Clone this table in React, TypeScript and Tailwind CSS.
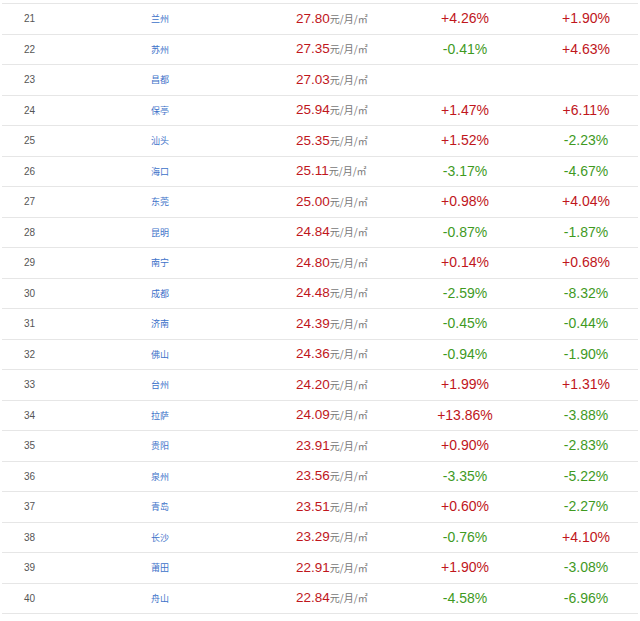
import React from "react";

const rows: [number, string, string, string, string][] = [
  [21, "兰州", "27.80", "+4.26%", "+1.90%"],
  [22, "苏州", "27.35", "-0.41%", "+4.63%"],
  [23, "昌都", "27.03", "", ""],
  [24, "保亭", "25.94", "+1.47%", "+6.11%"],
  [25, "汕头", "25.35", "+1.52%", "-2.23%"],
  [26, "海口", "25.11", "-3.17%", "-4.67%"],
  [27, "东莞", "25.00", "+0.98%", "+4.04%"],
  [28, "昆明", "24.84", "-0.87%", "-1.87%"],
  [29, "南宁", "24.80", "+0.14%", "+0.68%"],
  [30, "成都", "24.48", "-2.59%", "-8.32%"],
  [31, "济南", "24.39", "-0.45%", "-0.44%"],
  [32, "佛山", "24.36", "-0.94%", "-1.90%"],
  [33, "台州", "24.20", "+1.99%", "+1.31%"],
  [34, "拉萨", "24.09", "+13.86%", "-3.88%"],
  [35, "贵阳", "23.91", "+0.90%", "-2.83%"],
  [36, "泉州", "23.56", "-3.35%", "-5.22%"],
  [37, "青岛", "23.51", "+0.60%", "-2.27%"],
  [38, "长沙", "23.29", "-0.76%", "+4.10%"],
  [39, "莆田", "22.91", "+1.90%", "-3.08%"],
  [40, "舟山", "22.84", "-4.58%", "-6.96%"],
];

function Change({ v }: { v: string }) {
  if (!v) return null;
  const up = v.startsWith("+");
  return (
    <span className={up ? "text-[#c0161c]" : "text-[#3f9a1f]"}>{v}</span>
  );
}

export default function App() {
  return (
    <div
      className="w-[640px] h-[621px] bg-white pt-[3px] px-[2px]"
      style={{ fontFamily: '"Liberation Sans", "Noto Sans CJK SC", sans-serif' }}
    >
      <div className="border-t border-[#e6e6e6]">
        {rows.map(([n, city, price, c1, c2]) => (
          <div
            key={n}
            className="grid grid-cols-[149px_145px_104px_130px_108px] items-center h-[30.5px] border-b border-[#e6e6e6]"
          >
            <div className="pl-[22px] text-[10px] text-[#555]">{n}</div>
            <div
              className="text-[9px] text-[#3d72c9]"
              style={{ fontFamily: '"Noto Sans CJK SC", sans-serif' }}
            >
              {city}
            </div>
            <div className="flex items-baseline whitespace-nowrap">
              <span className="text-[13.5px] text-[#c0161c]">{price}</span>
              <span
                className="text-[10px] text-[#777]"
                style={{ fontFamily: '"Noto Sans CJK SC", sans-serif' }}
              >
                元/月/㎡
              </span>
            </div>
            <div className="text-center text-[14px]">
              <Change v={c1} />
            </div>
            <div className="text-center text-[14px] pl-[4px]">
              <Change v={c2} />
            </div>
          </div>
        ))}
      </div>
    </div>
  );
}
